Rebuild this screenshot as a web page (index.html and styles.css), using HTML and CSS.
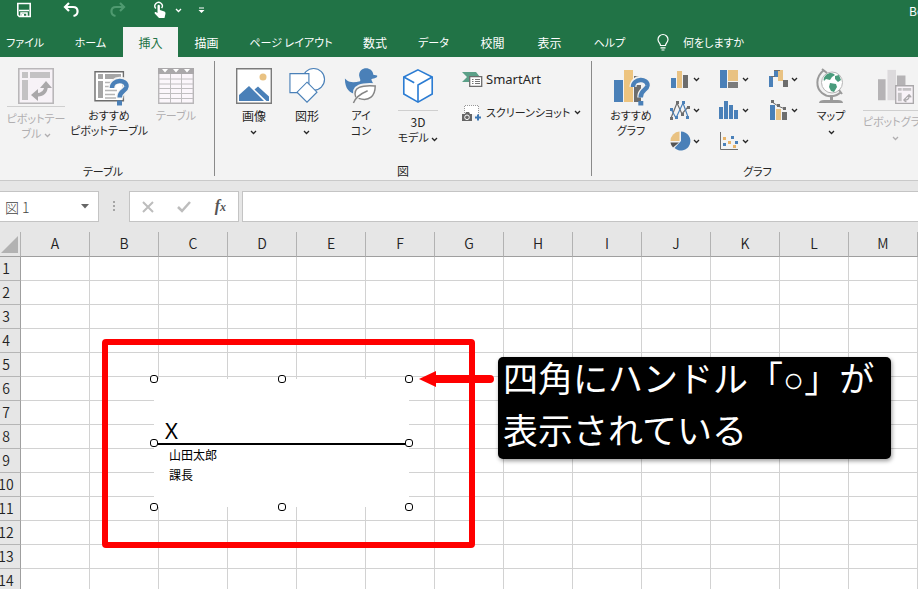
FILE: index.html
```html
<!DOCTYPE html>
<html lang="ja">
<head>
<meta charset="utf-8">
<title>Book1 - Excel</title>
<meta name="viewport" content="width=device-width, initial-scale=1">
<link rel="stylesheet" href="styles.css">
</head>
<body>
<svg class="defs" aria-hidden="true">
  <symbol id="chev" viewBox="0 0 7 5"><path d="M1 1l2.500 2.500L6 1" fill="none" stroke="currentColor" stroke-width="1.300"/></symbol>
</svg>

<header class="top">
  <div class="quick">
    <button class="q save" aria-label="上書き保存"><svg width="16" height="16" viewBox="0 0 16 16"><path d="M1.800 1.500h12.400v13H3.300L1.800 13z" fill="none" stroke="#fff" stroke-width="1.600"/><path d="M3 8.500h10M5 15v-4h6v4" fill="none" stroke="#fff" stroke-width="1.500"/><path d="M6 12h2v3H6z" fill="#fff"/></svg></button>
    <button class="q undo" aria-label="元に戻す"><svg width="16" height="16" viewBox="0 0 16 16"><path d="M6 1L2 5l4 4M2.500 5H10c6 0 6 8 .5 9" fill="none" stroke="#fff" stroke-width="2.200"/></svg></button>
    <button class="q redo" aria-label="やり直し"><svg width="16" height="16" viewBox="0 0 16 16"><path d="M10 1l4 4-4 4M13.500 5H6c-6 0-6 8-.5 9" fill="none" stroke="#4f9a70" stroke-width="2.200"/></svg></button>
    <button class="q touch" aria-label="タッチ/マウス モードの切り替え"><svg width="12" height="17" viewBox="0 0 12 17"><path d="M1.800 6.500a3.700 3.700 0 1 1 5.800-.3" fill="none" stroke="#fff" stroke-width="1.400"/><path d="M3.500 4a1.200 1.200 0 0 1 2.400 0v4l4.500 1.500c1 .5 1.300 1.500 1 2.500L10.500 16H5L.7 11.500c-.5-1 .6-1.800 1.500-1.200l1.300.8z" fill="#fff"/></svg><svg class="chev" width="7" height="5"><use href="#chev"/></svg></button>
    <button class="q more" aria-label="クイック アクセス ツール バーのカスタマイズ"><svg width="7" height="7" viewBox="0 0 7 7"><path d="M1 .5h5v1H1zM.5 3h6l-3 3z" fill="#fff"/></svg></button>
    <span class="doc">Bo</span>
  </div>
  <nav class="tabs">
    <a href="#" class="kana">ファイル</a><a href="#" class="kana">ホーム</a><a href="#" class="on">挿入</a><a href="#">描画</a><a href="#" class="kana">ページ レイアウト</a><a href="#">数式</a><a href="#" class="kana">データ</a><a href="#">校閲</a><a href="#">表示</a><a href="#" class="kana">ヘルプ</a>
    <a href="#" class="tell kana"><svg width="12" height="17" viewBox="0 0 12 17"><path d="M3.500 11.500C3.500 9 1 8.500 1 5.500a5 5 0 0 1 10 0c0 3-2.500 3.500-2.500 6zM3.500 13.800h5M4.500 16h3" fill="none" stroke="#fff" stroke-width="1.200"/></svg>何をしますか</a>
  </nav>
</header>

<main class="app">
<section class="ribbon">
  <div class="group tables">
    <div class="tools">
      <button class="big off split kana"><svg width="36" height="36" viewBox="0 0 36 36"><path d="M.8.800h34.400v34.400H.800z" fill="#f7f2f7" stroke="#b9b7b9" stroke-width="1.600"/><path d="M4 4h6v6H4zM12 4h20v6H12zM4 12h6v20H4z" fill="#c4c2c4"/><path d="M18 27c8 0 10-4 10-9" fill="none" stroke="#aaa8aa" stroke-width="3.500"/><path d="M13 27l7-6v12zM22 20l6-7 6 7z" fill="#aaa8aa"/></svg><span>ピボットテー<br>ブル <svg class="chev" width="7" height="5"><use href="#chev"/></svg></span></button>
      <button class="big kana"><svg width="36" height="36" viewBox="0 0 36 36"><path d="M4 3.700h28.400v29H4z" fill="#fff" stroke="#6d6d6d" stroke-width="1.400"/><path d="M7 6h5v5H7zM14 6h16v5H14zM7 13h5v17H7z" fill="#a5a5a5"/><path d="M14 14.500h12M14 18.500h9M14 22.500h12M14 26.500h10M14 30h11" stroke="#b5b5b5" stroke-width="1.500"/><path d="M21 20c0-10 15.500-10 14.500-1.500-.5 5-7 4-6.800 12" fill="none" stroke="#f3f2f1" stroke-width="7"/><path d="M21 20c0-9 15-9 14.500-1.500-.5 5-7 4-6.800 11" fill="none" stroke="#4a80b8" stroke-width="4.500"/><path d="M26 32.500h5v5h-5z" fill="#4a80b8"/></svg><span>おすすめ<br>ピボットテーブル</span></button>
      <button class="big off kana"><svg width="36" height="36" viewBox="0 0 36 36"><path d="M.7.700h34.600v34.600H.7z" fill="#fbf6fb" stroke="#b9b7b9" stroke-width="1.400"/><path d="M0 0h36v6H0z" fill="#aaa8aa"/><path d="M4 1h6L7 4.500zM15 1h6l-3 3.500zM26 1h6l-3 3.500z" fill="#fff"/><path d="M12.500 6v29M23.500 6v29M1 11h34M1 16h34M1 20.500h34M1 25.500h34M1 30.500h34" stroke="#c0bec0"/></svg><span>テーブル</span></button>
    </div>
    <h2 class="kana">テーブル</h2>
  </div>

  <div class="group illus">
    <div class="tools">
      <button class="big"><svg width="36" height="36" viewBox="0 0 36 36"><path d="M.7.700h34.600v34.600H.7z" fill="#fff" stroke="#7b7b7b" stroke-width="1.400"/><circle cx="27" cy="9" r="3.500" fill="#e9c282"/><path d="M3 33v-6l10-9 15 15z" fill="#4a80b8"/><path d="M18.500 21.500l3.500-3 11 10v4.500h-2.500z" fill="#4a80b8"/></svg><span>画像<br><svg class="chev" width="7" height="5"><use href="#chev"/></svg></span></button>
      <button class="big"><svg width="38" height="38" viewBox="0 0 38 38"><g fill="#fff" stroke="#4a80b8" stroke-width="1.200"><circle cx="26" cy="12" r="11.500"/><path d="M1 6h20v20H1z"/><path d="M19 15l10.500 10.500L19 36 8.500 25.500z"/></g></svg><span>図形<br><svg class="chev" width="7" height="5"><use href="#chev"/></svg></span></button>
      <button class="big kana"><svg width="36" height="38" viewBox="0 0 36 38"><path d="M16 8c0-10 14-10 15-1l4 1c1 2-3 3.500-6 3.500 0 3 3 4 2 8-2 8-11 8-17 8C6 27 1 22 1 11l2 2c4 3 9 2 14 1 1-1-.5-3-1-6z" fill="#4a80b8"/><path d="M12.500 30c-4-11 7-13 20.500-12 0 10-6 18-17 15z" fill="#fff" stroke="#f3f3f3" stroke-width="4"/><path d="M12.500 31c-4-11 7-13 20.500-12 0 10-6 17-17.500 13" fill="#fff" stroke="#858585" stroke-width="1.500"/><path d="M10 37c2-6 8-10 15-13" fill="none" stroke="#858585" stroke-width="1.500"/></svg><span>アイ<br>コン</span></button>
      <button class="big split deep kana"><svg width="34" height="38" viewBox="0 0 34 38"><path d="M17 2l15 7.500v18L17 36 2 27.500v-18z" fill="#fff" stroke="#2b7cd3" stroke-width="1.700"/><path d="M2 9.500l11 6M32 9.500L17 18v18" fill="none" stroke="#2b7cd3" stroke-width="1.700"/></svg><span><b>3D</b><br>モデル <svg class="chev" width="7" height="5"><use href="#chev"/></svg></span></button>
      <div class="stack">
        <button class="row"><svg width="20" height="17" viewBox="0 0 20 17"><path d="M0 1h14l4 5H8v5H0l5-5z" fill="#5ba088"/><path d="M7.700 5.700h12v9.600h-12z" fill="#fff" stroke="#6d6d6d" stroke-width="1.300"/><path d="M10 8.500h1.500M13 8.500h5M10 10.500h1.500M13 10.500h5M10 12.500h1.500M13 12.500h5" stroke="#777"/></svg><span class="latin">SmartArt</span></button>
        <button class="row kana"><svg width="20" height="18" viewBox="0 0 20 18"><path d="M2.500 9V1.500h14V11" fill="#fff" stroke="#999" stroke-dasharray="1 1"/><path d="M0 10h3l1-2h3l1 2h2v7H0z" fill="#666"/><circle cx="5" cy="13.300" r="2.300" fill="#666" stroke="#fff"/><path d="M16 10.500v6M13 13.500h6" stroke="#3e78b4" stroke-width="2"/></svg><span>スクリーンショット</span><svg class="chev" width="7" height="5"><use href="#chev"/></svg></button>
      </div>
    </div>
    <h2>図</h2>
  </div>

  <div class="group charts">
    <div class="tools">
      <button class="big kana"><svg width="36" height="36" viewBox="0 0 36 36"><path d="M1 12h9v22H1z" fill="#4a80b8"/><path d="M11 2h9v32h-9z" fill="#edc47f"/><path d="M21 8h9v2h-9zM21 17h7v17h-7z" fill="#6d6d6d"/><path d="M20 19c0-10 15.500-10 14.500-1.500-.5 5-7 4-6.800 12" fill="none" stroke="#f3f2f1" stroke-width="7"/><path d="M20 19c0-9 15-9 14.500-1.500-.5 5-7 4-6.800 12" fill="none" stroke="#4a80b8" stroke-width="4.500"/><path d="M25.300 33h5v4.500h-5z" fill="#4a80b8"/></svg><span>おすすめ<br>グラフ</span></button>
      <div class="minis">
        <button aria-label="縦棒/横棒グラフ"><svg width="20" height="20" viewBox="0 0 20 20"><path d="M1 9h5v10H1z" fill="#4a80b8"/><path d="M7 2h5v17H7z" fill="#e9c282"/><path d="M13 6h5v13h-5z" fill="#6d6d6d"/></svg><svg class="chev" width="7" height="5"><use href="#chev"/></svg></button>
        <button aria-label="階層構造グラフ"><svg width="20" height="20" viewBox="0 0 20 20"><path d="M1 1h7v18H1z" fill="#4a80b8"/><path d="M9 1h10v11H9z" fill="#e9c282"/><path d="M9 13h10v6H9z" fill="#7b7b7b"/></svg><svg class="chev" width="7" height="5"><use href="#chev"/></svg></button>
        <button aria-label="ウォーターフォール図"><svg width="20" height="20" viewBox="0 0 20 20"><path d="M1 7h4v11H1zM6 1h4v7H6z" fill="#4a80b8"/><path d="M10 1h5v11h-5z" fill="#e9c282"/><path d="M15 11h5v7h-5z" fill="#6d6d6d"/><path d="M3 7.500h4M6 1.500h6" stroke="#6d6d6d"/></svg><svg class="chev" width="7" height="5"><use href="#chev"/></svg></button>
        <button aria-label="折れ線グラフ"><svg width="20" height="20" viewBox="0 0 20 20"><path d="M1 18l6-15 5 11 6-7" fill="none" stroke="#6d6d6d" stroke-width="1.200"/><path d="M1 9l5 9 7-15 5 14" fill="none" stroke="#4a80b8" stroke-width="1.200"/><path d="M0 17h3v3H0zM6 1h3v3H6zM11 13h3v3h-3zM17 6h3v3h-3z" fill="#6d6d6d"/><path d="M0 8h3v3H0zM5 16h3v3H5zM12 1h3v3h-3zM16 16h3v3h-3z" fill="#4a80b8"/></svg><svg class="chev" width="7" height="5"><use href="#chev"/></svg></button>
        <button aria-label="統計グラフ"><svg width="20" height="20" viewBox="0 0 20 20"><path d="M0 7h4v12H0zM5 1h4v18H5zM10 5h4v14h-4zM15 10h4v9h-4z" fill="#4a80b8"/></svg><svg class="chev" width="7" height="5"><use href="#chev"/></svg></button>
        <button aria-label="複合グラフ"><svg width="20" height="20" viewBox="0 0 20 20"><path d="M2 5h5v15H2z" fill="#4a80b8"/><path d="M8 9h5v11H8z" fill="#e9c282"/><path d="M14 12h5v8h-5z" fill="#6d6d6d"/><path d="M4 2l6 4 7 3" fill="none" stroke="#6d6d6d"/><path d="M3 0h3v3H3zM9 4h3v3H9zM15 7h3v3h-3z" fill="#6d6d6d"/></svg><svg class="chev" width="7" height="5"><use href="#chev"/></svg></button>
        <button aria-label="円グラフ"><svg width="20" height="20" viewBox="0 0 20 20"><path d="M11 10V.5a9.500 9.500 0 1 1-6.500 16.500z" fill="#4a80b8"/><path d="M9.500 10V.5A9.500 9.500 0 0 0 .5 10z" fill="#e9c282"/><path d="M9 11.500H.5A9 9 0 0 0 3 16.500z" fill="#555"/></svg><svg class="chev" width="7" height="5"><use href="#chev"/></svg></button>
        <button aria-label="散布図"><svg width="20" height="20" viewBox="0 0 20 20"><path d="M1.500 1v17.500H19" fill="none" stroke="#6d6d6d"/><path d="M4 12h3v3H4zM12 5h3v3h-3zM16 10h3v3h-3z" fill="#4a80b8"/><path d="M4 6h3v3H4zM9 10h3v3H9zM14 14h3v3h-3z" fill="#e9b468"/></svg><svg class="chev" width="7" height="5"><use href="#chev"/></svg></button>
      </div>
      <button class="big kana"><svg width="28" height="36" viewBox="0 0 28 36"><circle cx="15" cy="14.500" r="10.500" fill="#fff" stroke="#b5b5b5"/><path d="M9 7c4-3 7-2 9 0l-3 2-2 3-4-1-2 2c-1-2 0-4 2-6zM18 8l4-1 2 5-3 2-3-3zM13 15l6 1 1 3-3 5-3-1-2-4z" fill="#4a9c7c"/><path d="M7 2C-2 9-1 20 5 25c6 5 14 4 19-1M5 1l5 4M22 22l3 4" fill="none" stroke="#9a9a9a" stroke-width="2"/><path d="M13 27h3v5h5c3 0 5 1 5 3H2c0-2 2-3 5-3h6z" fill="#9a9a9a"/></svg><span>マップ<br><svg class="chev" width="7" height="5"><use href="#chev"/></svg></span></button>
      <button class="big off split deep kana"><svg width="38" height="38" viewBox="0 0 38 38"><path d="M0 12h8v22H0zM20 8h9v10h-9z" fill="#b5b3b5"/><path d="M10 2h9v32h-9z" fill="#dcdadc"/><path d="M18.700 18.700h18.600v18.600H18.700z" fill="#f8f3f8" stroke="#aaa8aa" stroke-width="1.400"/><path d="M21 21h4v3h-4zM26 21h9v3h-9zM21 26h4v9h-4z" fill="#c4c2c4"/><path d="M28 34c4 0 5-2 5-5M27 34l3-3M27 34l3 2M33 28l-3 3M33 28l2 3" fill="none" stroke="#aaa8aa" stroke-width="1.300"/></svg><span>ピボットグラフ<br><svg class="chev" width="7" height="5"><use href="#chev"/></svg></span></button>
    </div>
    <h2 class="kana">グラフ</h2>
  </div>
</section>

<section class="formula">
  <div class="namebox"><input aria-label="名前ボックス" value="図 1"><button aria-label="名前の一覧"><svg width="8" height="5" viewBox="0 0 8 5"><path d="M0 0h8L4 4.500z" fill="#666"/></svg></button></div>
  <svg class="grip" width="2" height="11" viewBox="0 0 2 11"><path d="M0 0h2v2H0zM0 4h2v2H0zM0 8h2v2H0z" fill="#a5a5a5"/></svg>
  <div class="fx">
    <button aria-label="キャンセル"><svg width="12" height="12" viewBox="0 0 12 12"><path d="M1 1l10 10M11 1L1 11" stroke="#bdbdbd" stroke-width="2"/></svg></button>
    <button aria-label="入力"><svg width="14" height="12" viewBox="0 0 14 12"><path d="M1 6l4 4 8-9" fill="none" stroke="#bdbdbd" stroke-width="2.500"/></svg></button>
    <button class="fn" aria-label="関数の挿入">f<small>x</small></button>
  </div>
  <input class="bar" aria-label="数式バー">
</section>

<section class="sheet">
  <table>
    <colgroup><col class="rowcol"><col span="13"></colgroup>
    <thead><tr><td class="corner"><svg width="17" height="17" viewBox="0 0 17 17"><path d="M17 0v17H0z" fill="#b2b2b2"/></svg></td><th>A</th><th>B</th><th>C</th><th>D</th><th>E</th><th>F</th><th>G</th><th>H</th><th>I</th><th>J</th><th>K</th><th>L</th><th>M</th></tr></thead>
    <tbody>
      <tr><th>1</th><td></td><td></td><td></td><td></td><td></td><td></td><td></td><td></td><td></td><td></td><td></td><td></td><td></td></tr>
      <tr><th>2</th><td></td><td></td><td></td><td></td><td></td><td></td><td></td><td></td><td></td><td></td><td></td><td></td><td></td></tr>
      <tr><th>3</th><td></td><td></td><td></td><td></td><td></td><td></td><td></td><td></td><td></td><td></td><td></td><td></td><td></td></tr>
      <tr><th>4</th><td></td><td></td><td></td><td></td><td></td><td></td><td></td><td></td><td></td><td></td><td></td><td></td><td></td></tr>
      <tr><th>5</th><td></td><td></td><td></td><td></td><td></td><td></td><td></td><td></td><td></td><td></td><td></td><td></td><td></td></tr>
      <tr><th>6</th><td></td><td></td><td></td><td></td><td></td><td></td><td></td><td></td><td></td><td></td><td></td><td></td><td></td></tr>
      <tr><th>7</th><td></td><td></td><td></td><td></td><td></td><td></td><td></td><td></td><td></td><td></td><td></td><td></td><td></td></tr>
      <tr><th>8</th><td></td><td></td><td></td><td></td><td></td><td></td><td></td><td></td><td></td><td></td><td></td><td></td><td></td></tr>
      <tr><th>9</th><td></td><td></td><td></td><td></td><td></td><td></td><td></td><td></td><td></td><td></td><td></td><td></td><td></td></tr>
      <tr><th>10</th><td></td><td></td><td></td><td></td><td></td><td></td><td></td><td></td><td></td><td></td><td></td><td></td><td></td></tr>
      <tr><th>11</th><td></td><td></td><td></td><td></td><td></td><td></td><td></td><td></td><td></td><td></td><td></td><td></td><td></td></tr>
      <tr><th>12</th><td></td><td></td><td></td><td></td><td></td><td></td><td></td><td></td><td></td><td></td><td></td><td></td><td></td></tr>
      <tr><th>13</th><td></td><td></td><td></td><td></td><td></td><td></td><td></td><td></td><td></td><td></td><td></td><td></td><td></td></tr>
      <tr><th>14</th><td></td><td></td><td></td><td></td><td></td><td></td><td></td><td></td><td></td><td></td><td></td><td></td><td></td></tr>
    </tbody>
  </table>

  <div class="signature">
    <div class="mark">X</div>
    <div class="signer">山田太郎<br>課長</div>
    <i class="h n w"></i><i class="h n c"></i><i class="h n e"></i><i class="h m w"></i><i class="h m e"></i><i class="h s w"></i><i class="h s c"></i><i class="h s e"></i>
  </div>
  <div class="frame"></div>
  <svg class="arrow" width="76" height="16" viewBox="0 0 76 16"><path d="M14 8h57" stroke="#f00" stroke-width="8" stroke-linecap="round"/><path d="M0 8L17 0v16z" fill="#f00"/></svg>
  <div class="callout"><p>四角にハンドル「<span>○</span>」が<br>表示されている</p></div>
</section>
</main>
</body>
</html>
```
FILE: styles.css
```css
* { box-sizing: border-box; }
body {
  margin: 0;
  height: 100vh;
  overflow: hidden;
  display: flex;
  flex-direction: column;
  background: #e6e6e6;
  color: #262626;
  font: 12px/15px "Noto Sans CJK JP", sans-serif;
  font-feature-settings: "palt";
}
.defs { position: absolute; width: 0; height: 0; }
button { border: 0; padding: 0; background: none; color: inherit; font: inherit; font-feature-settings: inherit; }
svg { display: block; flex: none; overflow: visible; }
.chev { display: inline-block; vertical-align: middle; }
.kana { font-size: 11px; }

.top { background: #217346; color: #fff; overflow: hidden; }
.quick { display: flex; align-items: center; height: 27px; padding: 0 0 7px 16px; }
.q { display: flex; align-items: center; gap: 9px; }
.undo { margin-left: 31px; }
.redo { margin-left: 31px; }
.touch { margin-left: 28px; }
.more { margin-left: 16px; }
.doc { margin-left: auto; width: 9px; white-space: nowrap; }
.tabs {
  display: grid;
  grid-template-columns: 66px 65px 55px 57px 112px 56px 61px 57px 57px 63px 1fr;
  height: 30px;
  margin-left: -8px;
}
.tabs a { display: flex; align-items: center; justify-content: center; color: inherit; text-decoration: none; white-space: nowrap; }
.tabs .on { background: #f3f3f3; color: #217346; }
.tabs .tell { justify-content: flex-start; gap: 14px; padding-left: 16px; }

.app { flex: 1; min-height: 0; display: flex; flex-direction: column; }
.ribbon {
  display: flex;
  height: 124px;
  padding: 4px 0;
  background: #f3f3f3;
  border-bottom: 1px solid #c9c9c9;
  overflow: hidden;
}
.group { flex: none; display: flex; flex-direction: column; justify-content: space-between; height: 115px; border-right: 1px solid #8a8a8a; }
.tables { width: 215px; }
.illus { width: 377px; }
.charts { width: 340px; }
.group h2 { margin: 0; padding-right: 8px; font-weight: 400; line-height: 10px; text-align: center; }
.group h2:not(.kana) { padding: 0; font-size: 12px; }
.tools { display: grid; padding-top: 7px; }
.tables .tools { grid-template-columns: 72px 74px 60px; }
.illus .tools { grid-template-columns: 66px 40px 68px 46px 1fr; padding-left: 6px; }
.charts .tools { grid-template-columns: 78px 147px 28px 102px; }
.big { display: flex; flex-direction: column; align-items: center; justify-content: flex-start; white-space: nowrap; min-width: 0; }
.big > svg { height: 36px; }
.big > span { margin-top: 4px; text-align: center; }
.big b { font-size: 12px; font-weight: 400; }
.split > span { border-top: 1px solid #cfcfcf; margin-top: 2px; padding-top: 4px; }
.deep > span { margin-top: 6px; padding-top: 3px; }
.off { color: #b0aeb0; }
.stack { display: flex; flex-direction: column; align-items: flex-start; gap: 16px; padding: 3px 0 0 21px; }
.row { display: flex; align-items: center; gap: 4px; height: 17px; white-space: nowrap; }
.latin { font: 13px/17px "Noto Sans", sans-serif; }
.minis { display: grid; grid-template-columns: 49px 49px 49px; grid-auto-rows: 31px; }
.minis button { display: flex; align-items: center; gap: 3px; height: 22px; }

.formula { display: flex; align-items: center; height: 51px; }
.namebox, .fx, .bar { height: 31px; background: #fff; border: 1px solid #c4c4c4; }
.namebox { display: flex; align-items: center; width: 99px; border-left: 0; padding-right: 9px; }
.namebox input { flex: 1; min-width: 0; height: 29px; border: 0; padding: 1px 0 0 5px; background: none; color: #444; font: 14px/20px "Noto Sans CJK JP", sans-serif; font-weight: 300; }
.grip { margin: 0 14px; }
.fx { display: flex; align-items: center; justify-content: space-between; width: 110px; padding: 0 12px; }
.fn { color: #555; font: italic bold 16px/20px "Liberation Serif", serif; }
.fn small { font-size: 12px; }
.bar { flex: 1; min-width: 0; margin-left: 3px; border-right: 0; }

.sheet { position: relative; flex: 1; min-height: 0; overflow: hidden; background: #fff; }
table { width: 926px; margin-left: -8px; table-layout: fixed; border-collapse: separate; border-spacing: 0; }
col { width: 69px; }
.rowcol { width: 29px; }
tr { height: 24px; }
td, th { height: 24px; padding: 0; border-right: 1px solid #d2d2d2; border-bottom: 1px solid #d2d2d2; }
th { padding-bottom: 2px; background: #e6e6e6; color: #222; font-size: 14px; font-weight: 350; line-height: 20px; text-align: center; border-right-color: #9f9f9f; border-bottom-color: #b5b5b5; }
thead th, .corner { height: 25px; border-right-color: #b2b2b2; border-bottom-color: #9f9f9f; background: #e6e6e6; }
.corner svg { margin-left: 9px; }

.signature { position: absolute; left: 154px; top: 147px; width: 255px; height: 128px; background: #fff; color: #000; }
.mark { height: 66px; padding: 39px 0 0 11px; border-bottom: 2px solid #000; font: 22px/25px "Noto Sans", sans-serif; }
.signer { padding: 0 0 0 15px; line-height: 20px; }
.h { position: absolute; width: 8px; height: 8px; border: 1px solid #000; border-radius: 3px; background: #fff; }
.n { top: -4px; }
.m { top: 60px; }
.s { top: 124px; }
.w { left: -4px; }
.c { left: 124px; }
.e { left: 251px; }
.frame { position: absolute; left: 102px; top: 107px; width: 373px; height: 209px; border: 6px solid #f00; border-radius: 4px; }
.arrow { position: absolute; left: 419px; top: 139px; }
.callout {
  position: absolute;
  left: 498px;
  top: 125px;
  display: flex;
  align-items: flex-end;
  width: 393px;
  height: 102px;
  padding: 0 5px 4px;
  border-radius: 5px;
  background: #000;
  color: #fff;
  box-shadow: 1px 2px 4px #0006;
  font-size: 35px;
  line-height: 52px;
  white-space: nowrap;
  font-feature-settings: normal;
}
.callout p { margin: 0; }
.callout span { font-family: "Liberation Sans", sans-serif; line-height: 1; }
```
